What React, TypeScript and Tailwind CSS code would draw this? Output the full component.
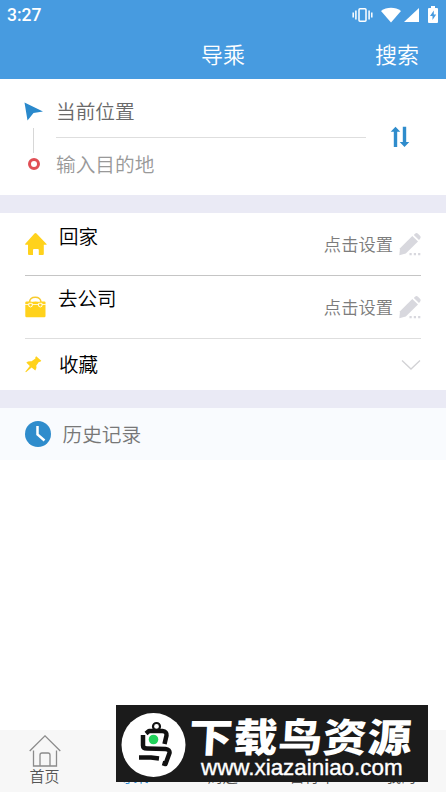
import type { ReactNode } from 'react'

const TABS = [
  { label: '导乘', active: true },
  { label: '周边', active: false },
  { label: '自行车', active: false },
  { label: '我的', active: false },
]

function StatusBar() {
  return (
    <div className="flex h-[31px] items-center justify-between pl-[7px] pr-2">
      <span className="font-['Roboto',sans-serif] text-[17.5px] font-medium leading-none">3:27</span>
      <div className="mb-[2px] flex items-center">
        <svg width="21" height="16" viewBox="0 0 21 16" fill="none" stroke="currentColor" strokeWidth="1.5">
          <path d="M1.200 5.500v5M3.900 3.500v9M17.100 3.500v9M19.800 5.500v5" />
          <rect x="7" y="1.800" width="7" height="12.400" rx="1" />
        </svg>
        <svg className="ml-2" width="20" height="16" viewBox="0 0 20 16" fill="currentColor">
          <path d="M0 4C5.500 -.3 14.500 -.3 20 4L10 15.500Z" />
        </svg>
        <svg className="ml-[3px]" width="15" height="16" viewBox="0 0 15 16" fill="currentColor">
          <path d="M15 1v14H0z" />
        </svg>
        <svg className="ml-[9px]" width="10" height="17" viewBox="0 0 10 17">
          <path d="M3 0h4v2h2q1 0 1 1v13q0 1-1 1H1q-1 0-1-1V3q0-1 1-1h2z" fill="currentColor" />
          <path d="M5.800 4.500 2 10h2.500v4L8.200 8.500H5.800z" fill="#479be0" />
        </svg>
      </div>
    </div>
  )
}

function HomeIcon() {
  return (
    <svg width="22" height="23" viewBox="0 0 22 23" fill="#ffd21c">
      <path d="M10.500 0Q11 0 11.500.6L21.500 11q.5.700-.4.800H18.800V21q0 1-1 1h-4v-5q0-1-1-1H9q-1 0-1 1v5H4q-1 0-1-1V11.800H.7Q-.4 11.600.3 10.800L9.500.6Q10 0 10.500 0Z" />
    </svg>
  )
}

function BriefcaseIcon() {
  return (
    <svg width="21" height="22" viewBox="0 0 21 22">
      <path d="M4.500 6C5 -.5 15.500 -.5 16 6" fill="none" stroke="#f8cb2e" strokeWidth="1.500" />
      <path d="M1.500 5.500h18q1 0 1 1V20q0 1.200-1.200 1.200H1.500Q.3 21.200.3 20V6.700q0-1.200 1.200-1.200Z" fill="#ffd21c" />
      <path d="M0 8.500h20.800" stroke="#fff" strokeWidth=".8" />
      <g fill="#ffd21c" stroke="#fff" strokeWidth=".9">
        <path d="M3.800 7.300h3.400v2.900q-1.700 1.600-3.400 0zM13.600 7.300H17v2.900q-1.700 1.600-3.400 0z" />
      </g>
      <path d="M6.500 5.500q4-2 8 0" fill="none" stroke="#fff" strokeWidth=".8" />
    </svg>
  )
}

function PinIcon() {
  return (
    <svg width="17" height="17" viewBox="0 0 17 17" fill="#ffd21c">
      <path d="M11.200.2 16.300 4.800Q15.500 6.200 14 5.800L11.300 9.500Q12.200 12.700 10.300 14.500L6.600 11.500 1 16.300.3 15.700 4.800 10 1.300 6.600Q3.300 4.700 6.600 5.300L10.400 2.400Q9.900 1 11.200.2Z" />
    </svg>
  )
}

function PencilIcon() {
  return (
    <svg width="22" height="23" viewBox="0 0 22 23" fill="#d8d8de">
      <path d="m13.300 3 5.700 5.500L6.800 20.500.3 22.300 1 15.200Z" />
      <path d="M14.800 1.900 16 .7Q17.500-.5 19 .7l2 2.100q1.300 1.400 0 2.900l-1 1.400Z" />
      <path d="M10.500 20h2.200v2.200h-2.200zM14.800 20H17v2.200h-2.200zM19.100 20h2.200v2.200h-2.200z" />
    </svg>
  )
}

function Shortcut({
  icon,
  label,
  labelClass,
  className,
}: {
  icon: ReactNode
  label: string
  labelClass: string
  className: string
}) {
  return (
    <div className={`mx-[25px] flex border-b ${className}`}>
      <div className="w-[33px] pt-[20px]">{icon}</div>
      <span className={`flex-1 text-[19.5px] leading-[29px] text-black ${labelClass}`}>{label}</span>
      <span className="pr-[6px] pt-[17px] text-[17.3px] leading-[27px] text-[#7c7c7c]">点击设置</span>
      <div className="pt-[20px]">
        <PencilIcon />
      </div>
    </div>
  )
}

function SiteBanner() {
  return (
    <div className="absolute left-[116px] top-[705px] flex h-[77px] w-[312px] bg-[#1b1b1b] text-white">
      <svg className="ml-[5px] mt-2 shrink-0" width="65" height="65" viewBox="0 0 65 65">
        <circle cx="32.500" cy="32" r="32" fill="#fff" />
        <g fill="none" stroke="#111" strokeWidth="4.500" strokeLinejoin="round">
          <path d="M25 20.500 28 18h13.500q4.500.500 4 4.500l-2 8.500" />
          <path d="M22 22v10.500q0 3 4 3l18.500.5q4.500.500 4 4l-4 11-3-1" />
          <path d="M18 44.500h12l8 1" />
          <circle cx="35.500" cy="13.500" r="3.500" strokeWidth="2.200" />
        </g>
        <circle cx="32.500" cy="26.500" r="4.800" fill="#21d45b" />
      </svg>
      <div className="flex-1 whitespace-nowrap">
        <div className="ml-[3px] mt-[8px] h-[44px] origin-left -skew-x-3 scale-y-90 text-[44px] font-black leading-[44px] tracking-[0.7px]">
          下载鸟资源
        </div>
        <div className="ml-[15px] font-['Liberation_Sans',sans-serif] text-[22.4px] leading-[22px] [-webkit-text-stroke:0.4px_white]">
          www.xiazainiao.com
        </div>
      </div>
    </div>
  )
}

export default function App() {
  return (
    <div className="relative flex h-[792px] w-[446px] flex-col overflow-hidden bg-white font-['Noto_Sans_CJK_SC',sans-serif] font-[350]">
      <header className="h-[79px] bg-[#479be0] text-white">
        <StatusBar />
        <div className="grid h-[44px] grid-cols-3 items-center text-[22px] leading-[32px]">
          <span className="col-start-2 text-center">导乘</span>
          <span className="pr-[27px] text-right">搜索</span>
        </div>
      </header>

      <section className="flex h-[116px]">
        <div className="flex w-[56px] flex-col pl-[24px] pt-[23px]">
          <svg width="20" height="20" viewBox="0 0 20 20" fill="#2a89cc">
            <path d="M.5.500 19 9.500 9.500 11 3.500 18.500Z" />
          </svg>
          <div className="ml-[9px] mt-[6px] h-[25px] w-px bg-[#d7d7d7]" />
          <div className="ml-[4px] mt-[5px] size-[12px] rounded-full border-[3px] border-[#e04f55]" />
        </div>
        <div className="w-[310px] text-[19.7px]">
          <div className="h-[58.5px] border-b border-[#dedede] pt-[17px] leading-[30px] text-[#696969]">当前位置</div>
          <div className="pt-[11px] leading-[30px] text-[#999]">输入目的地</div>
        </div>
        <div className="pl-[24px] pt-[47px]">
          <svg width="20" height="22" viewBox="0 0 20 22" fill="#2f8ccc">
            <path d="M5.500.700 10.300 5.700H7.200V21H3.800V5.700H.7zM12.800.700h3.400V16h3.100l-4.800 5-4.800-5h3.100z" />
          </svg>
        </div>
      </section>
      <div className="h-[18px] bg-[#eaeaf5]" />

      <section className="h-[177px]">
        <Shortcut icon={<HomeIcon />} label="回家" labelClass="pl-px pt-[8px]" className="h-[63px] border-[#c5c5c5]" />
        <Shortcut icon={<BriefcaseIcon />} label="去公司" labelClass="pt-[7px]" className="h-[63px] border-[#dedede]" />
        <div className="mx-[25px] flex h-[51px] items-center">
          <div className="w-[34px]">
            <PinIcon />
          </div>
          <span className="mb-[2px] flex-1 text-[19.5px] text-black">收藏</span>
          <svg width="20" height="12" viewBox="0 0 20 12" fill="none" stroke="#d2d2d5" strokeWidth="1.300">
            <path d="m1 1.500 9 8.500 9-8.500" />
          </svg>
        </div>
      </section>
      <div className="h-[18px] bg-[#eaeaf5]" />

      <section className="flex h-[52px] items-center bg-[#f9fbfe] pl-[24.5px]">
        <svg width="26" height="26" viewBox="0 0 26 26">
          <circle cx="13" cy="13" r="13" fill="#2f8ccc" />
          <path d="M12.500 5v8.500l7 6" fill="none" stroke="#fff" strokeWidth="2.500" />
        </svg>
        <span className="ml-[12px] text-[19.7px] text-[#777]">历史记录</span>
      </section>

      <nav className="mt-auto flex h-[62px] bg-[#f7f7f7] text-[15px] text-[#555]">
        <div className="flex w-[89px] flex-col items-center pt-[5px]">
          <svg width="32" height="32" viewBox="0 0 32 32" fill="none" stroke="#8b8b8b" strokeWidth="1.300">
            <path d="M.7 16 16 .9 31.300 16M4.500 15.500V31h23V15.500M11 31V20q0-2 2-2h6q2 0 2 2v11" />
          </svg>
          <span className="mt-[-1px] leading-[20px]">首页</span>
        </div>
        {TABS.map((tab) => (
          <div key={tab.label} className={`flex flex-1 items-end justify-center pb-[6px] leading-[20px] ${tab.active ? 'text-[#2586d0]' : ''}`}>
            {tab.label}
          </div>
        ))}
      </nav>
      <SiteBanner />
    </div>
  )
}
